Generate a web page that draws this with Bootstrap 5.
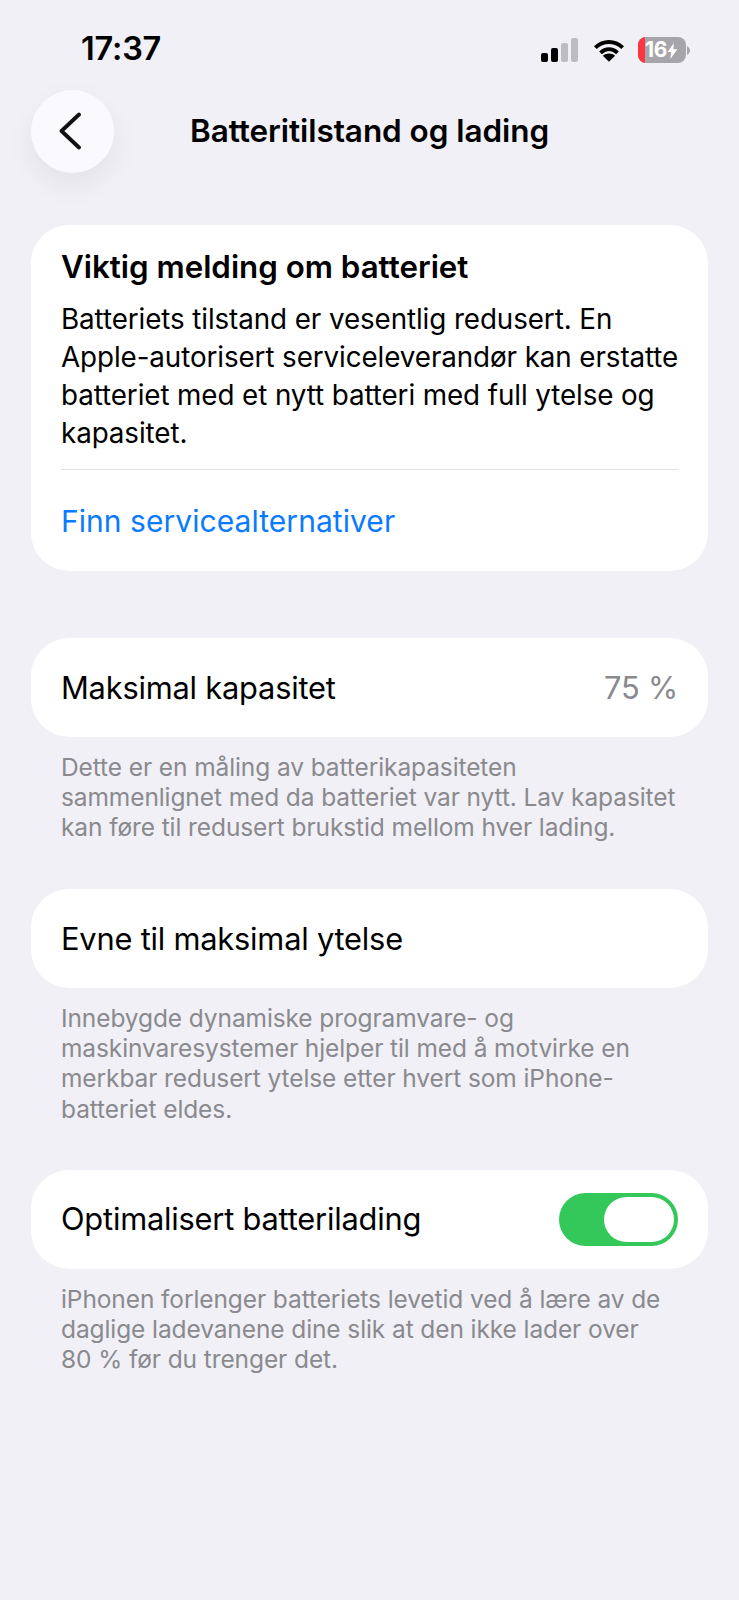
<!doctype html>
<html lang="nb"><head><meta charset="utf-8">
<link href="https://cdn.jsdelivr.net/npm/bootstrap@5.3.0/dist/css/bootstrap.min.css" rel="stylesheet">
<style>
html,body{height:100%}
body{background:#f0f0f6;font-family:Inter,"Liberation Sans",sans-serif;color:#000;width:739px;height:1600px;overflow:hidden}
.statusline{height:89px;padding:31px 49px 0 81px}
.clock{font-size:32.5px;font-weight:600;line-height:36px;letter-spacing:-.2px}
.status-icons{padding-top:6px}
.cellsig{gap:3.3px;height:24px;margin-right:15px}
.cellsig i{display:block;width:6.8px;border-radius:2px;background:#000}
.wifi{margin-right:13px}
.batt{position:relative;width:48px;height:26px;border-radius:8px;background:#a6a6aa;overflow:hidden;color:#fff;font-size:21px;font-weight:700;line-height:26px;padding-left:7px;white-space:nowrap;letter-spacing:-.2px}
.topline{height:84px;padding:0 31px}
.backbtn{width:83px;height:83px;border-radius:50%;background:#fafafe;box-shadow:0 12px 30px rgba(0,0,0,.06);flex:none;padding-right:6px}
.pagetitle{font-size:31.5px;font-weight:600;margin:0;flex:1;text-align:center;padding-right:83px;letter-spacing:-.06px;line-height:86px}
.sheet{margin:0 31px;border:0;border-radius:38px;background:#fff}
.sheet-a{margin-top:52px;height:346px;padding:22px 30px 0}
.heading{font-size:31.3px;font-weight:600;line-height:40px;margin:0 0 13px;letter-spacing:0}
.bodytxt{font-size:27.8px;line-height:38px;margin:0;letter-spacing:-.1px;white-space:nowrap}
.rule{height:1px;background:#e0e0e3;margin:17px 0 0}
.linktxt{display:block;color:#0a7aff;font-size:30px;line-height:40px;margin-top:31px;text-decoration:none;letter-spacing:.05px}
.rowsheet{height:99px;padding:0 30px;font-size:30.8px;letter-spacing:-.2px;line-height:40px}
.rowlabel{padding-top:1px}
.mute{color:#8a8a8e}
.note{margin:15px 61px 0;font-size:24.5px;line-height:30.1px;color:#8a8a8e;letter-spacing:-.1px}
.gap-b{margin-top:67px}
.gap-c{margin-top:47px}
.gap-d{margin-top:46px}
.sw{width:119px;height:53px;border-radius:27px;background:#34c759;padding:4px;display:flex;justify-content:flex-end}
.sw span{display:block;width:70px;height:45px;border-radius:23px;background:#fff}
</style></head>
<body>
<div class="statusline d-flex justify-content-between align-items-start">
  <div class="clock">17:37</div>
  <div class="status-icons d-flex align-items-center">
    <div class="cellsig d-flex align-items-end">
      <i style="height:9px"></i><i style="height:14px"></i><i style="height:19px;background:#bdbdc1"></i><i style="height:24px;background:#bdbdc1"></i>
    </div>
    <svg class="wifi" width="32" height="25" viewBox="0 0 34 25"><path d="M2.500 9.500C11 1.500 23 1.500 31.500 9.500M8 15c5.500-5 12.500-5 18 0" fill="none" stroke="#000" stroke-width="4.200"/><path d="M17 24.500l-6.500-6.500c3.500-3 9.500-3 13 0z" fill="#000"/></svg>
    <div class="d-flex align-items-center">
      <div class="batt"><span class="position-absolute top-0 start-0 h-100" style="width:7px;background:#fb3640"></span>16<svg width="11" height="16" viewBox="0 0 11 18"><path d="M7 0L0 10h4l-1 8 8-11H6.500z" fill="#fff"/></svg></div>
      <svg width="4" height="9" viewBox="0 0 4 9"><path d="M1 0c2 1 3 3 3 4.500S3 8 1 9z" fill="#a6a6aa"/></svg>
    </div>
  </div>
</div>
<div class="topline d-flex align-items-center">
  <div class="backbtn d-flex align-items-center justify-content-center">
    <svg width="24" height="38" viewBox="0 0 24 38"><path d="M21 2.500L3.500 19 21 35.500" fill="none" stroke="#111" stroke-width="3.800" stroke-linecap="round" stroke-linejoin="round"/></svg>
  </div>
  <h1 class="pagetitle">Batteritilstand og lading</h1>
</div>
<div class="card sheet sheet-a">
  <h2 class="heading">Viktig melding om batteriet</h2>
  <p class="bodytxt">Batteriets tilstand er vesentlig redusert. En<br>Apple-autorisert serviceleverandør kan erstatte<br>batteriet med et nytt batteri med full ytelse og<br>kapasitet.</p>
  <div class="rule"></div>
  <a class="linktxt" href="#">Finn servicealternativer</a>
</div>
<div class="card sheet rowsheet gap-b d-flex flex-row align-items-center justify-content-between">
  <span class="rowlabel">Maksimal kapasitet</span><span class="mute rowlabel">75 %</span>
</div>
<p class="note">Dette er en måling av batterikapasiteten<br>sammenlignet med da batteriet var nytt. Lav kapasitet<br>kan føre til redusert brukstid mellom hver lading.</p>
<div class="card sheet rowsheet gap-c d-flex flex-row align-items-center">
  <span>Evne til maksimal ytelse</span>
</div>
<p class="note">Innebygde dynamiske programvare- og<br>maskinvaresystemer hjelper til med å motvirke en<br>merkbar redusert ytelse etter hvert som iPhone-<br>batteriet eldes.</p>
<div class="card sheet rowsheet gap-d d-flex flex-row align-items-center justify-content-between">
  <span>Optimalisert batterilading</span>
  <div class="sw"><span></span></div>
</div>
<p class="note">iPhonen forlenger batteriets levetid ved å lære av de<br>daglige ladevanene dine slik at den ikke lader over<br>80 % før du trenger det.</p>
<script src="https://cdn.jsdelivr.net/npm/bootstrap@5.3.0/dist/js/bootstrap.bundle.min.js"></script>
</body></html>
